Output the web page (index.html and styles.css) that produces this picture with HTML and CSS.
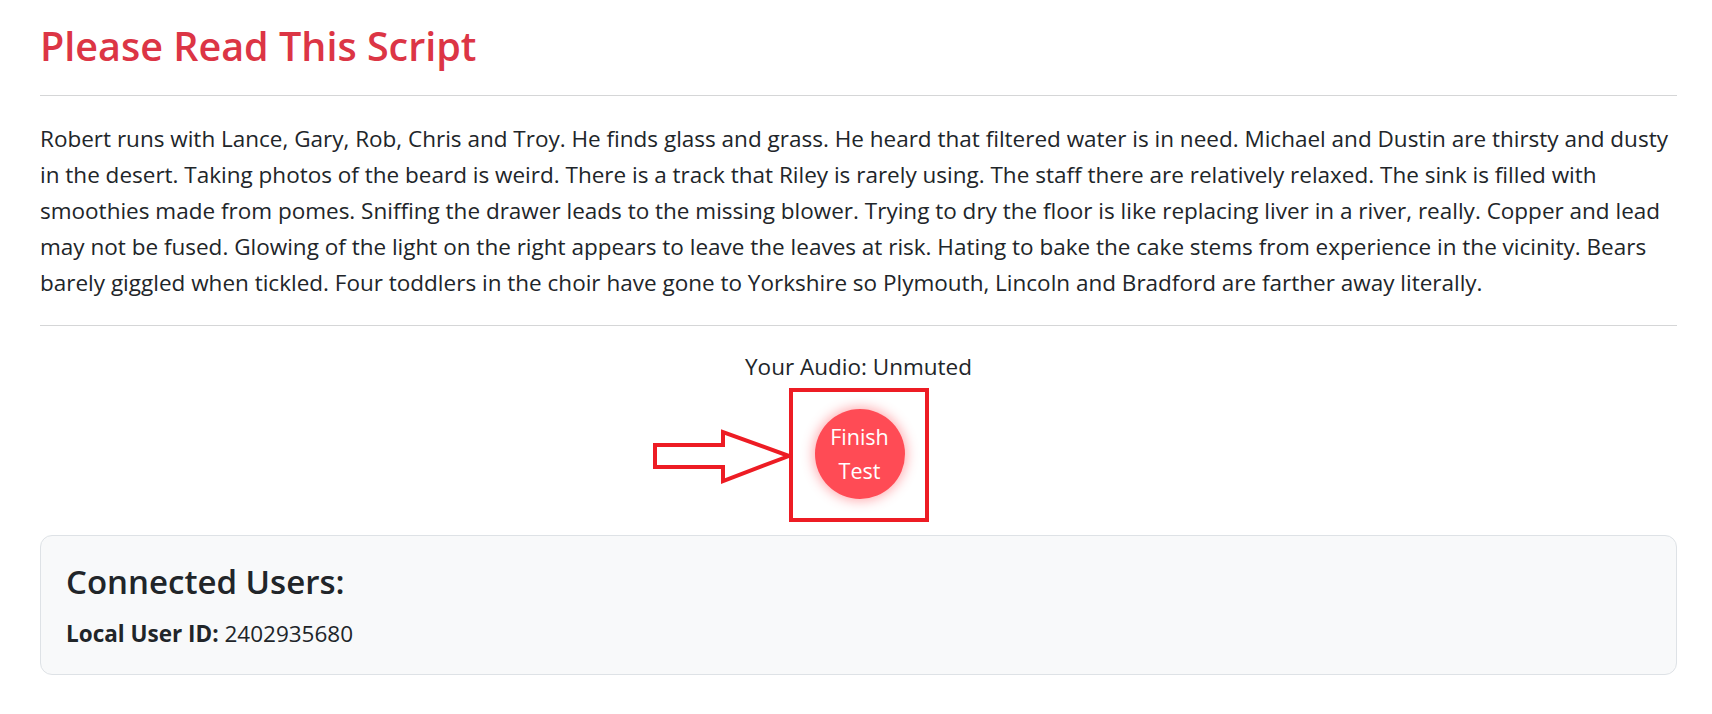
FILE: index.html
```html
<!DOCTYPE html>
<html lang="en">
<head>
<meta charset="utf-8">
<title>Please Read This Script</title>
<link rel="stylesheet" href="styles.css">
</head>
<body>
<main class="page">
  <h1 class="title">Please Read This Script</h1>
  <hr class="rule rule-top">
  <p class="script">Robert runs with Lance, Gary, Rob, Chris and Troy. He finds glass and grass. He heard that filtered water is in need. Michael and Dustin are thirsty and dusty in the desert. Taking photos of the beard is weird. There is a track that Riley is rarely using. The staff there are relatively relaxed. The sink is filled with smoothies made from pomes. Sniffing the drawer leads to the missing blower. Trying to dry the floor is like replacing liver in a river, really. Copper and lead may not be fused. Glowing of the light on the right appears to leave the leaves at risk. Hating to bake the cake stems from experience in the vicinity. Bears barely giggled when tickled. Four toddlers in the choir have gone to Yorkshire so Plymouth, Lincoln and Bradford are farther away literally.</p>
  <hr class="rule rule-bottom">
  <section class="controls">
    <div class="audio-status">Your Audio: Unmuted</div>
    <div class="highlight">
      <svg class="arrow" width="142" height="57" viewBox="0 0 142 57" aria-hidden="true">
        <polygon points="4,17 72,17 72,4 138,28 72,53 72,39 4,39" fill="#ffffff" stroke="#ed1c24" stroke-width="4" stroke-linejoin="miter"/>
      </svg>
      <button class="finish-btn" type="button">Finish<br>Test</button>
    </div>
  </section>
  <section class="users-card">
    <h2 class="users-title">Connected Users:</h2>
    <div class="users-line"><strong>Local User ID:</strong> 2402935680</div>
  </section>
</main>
</body>
</html>
```
FILE: styles.css
```css
* { box-sizing: border-box; }
html, body { margin: 0; padding: 0; background: #ffffff; }
body {
  font-family: "Open Sans", "Noto Sans", sans-serif;
  color: #212529;
}
.page {
  padding: 20px 35px 0 40px;
}
.title {
  margin: 0;
  font-size: 39.5px;
  line-height: 52px;
  font-weight: 600;
  color: #dc3545;
}
.rule {
  border: 0;
  border-top: 1px solid #d5d6d7;
  margin: 0;
  height: 0;
}
.rule-top { margin-top: 23px; margin-bottom: 25px; }
.script {
  margin: 0;
  font-size: 22.5px;
  line-height: 36px;
}
.rule-bottom { margin-top: 24px; }
.controls {
  display: flex;
  flex-direction: column;
  align-items: center;
  padding-top: 23px;
}
.audio-status {
  font-size: 22.5px;
  line-height: 36px;
}
.highlight {
  position: relative;
  margin-top: 3px;
  width: 140px;
  height: 134px;
  border: 4px solid #ed1c24;
  padding: 17px 20px 19px 22px;
}
.arrow {
  position: absolute;
  left: -142px;
  top: 36px;
}
.finish-btn {
  width: 90px;
  height: 90px;
  border-radius: 50%;
  border: 0;
  padding: 0;
  background: #ff4b55;
  color: #ffffff;
  font-family: "Open Sans", "Noto Sans", sans-serif;
  font-size: 21.5px;
  line-height: 34px;
  box-shadow: 0 0 12px 2px rgba(255, 75, 85, 0.45);
  cursor: pointer;
}
.users-card {
  margin-top: 13px;
  background: #f8f9fa;
  border: 1px solid #dee2e6;
  border-radius: 12px;
  padding: 25px 25px 22px 25px;
}
.users-title {
  margin: 0 0 13px 0;
  font-size: 33px;
  line-height: 42px;
  font-weight: 600;
}
.users-line {
  font-size: 22.5px;
  line-height: 36px;
}
.users-line strong { font-weight: 700; }
```
